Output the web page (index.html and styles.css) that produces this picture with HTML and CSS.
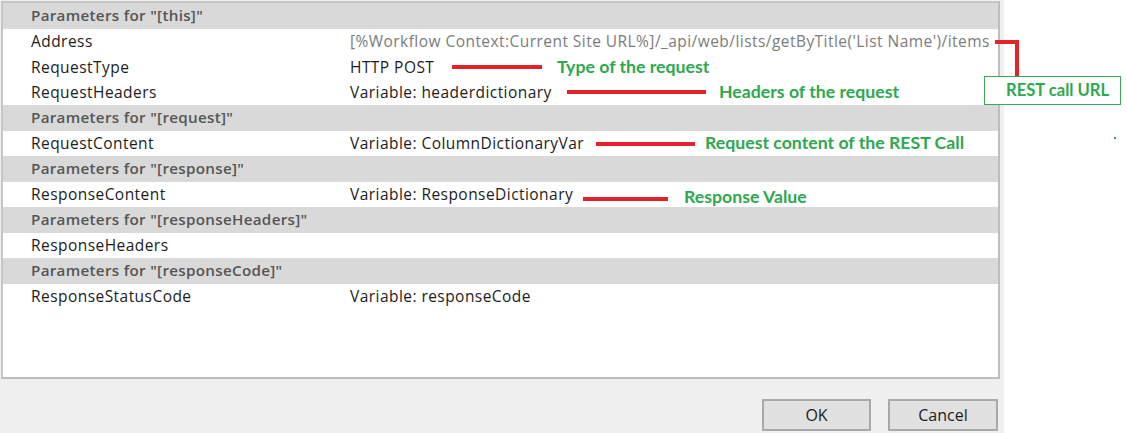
FILE: index.html
```html
<!DOCTYPE html>
<html>
    <head>
        <meta charset="utf-8" />
        <title>REST call parameters</title>
        <link rel="stylesheet" href="styles.css">
    </head>
    <body>
        <div class="stage">
            <div class="dialog">
                <div class="param-list">
                    <div class="group">Parameters for "[this]"</div>
                    <div class="row">
                        <span class="label">Address</span>
                        <span class="value readonly">[%Workflow Context:Current Site URL%]/_api/web/lists/getByTitle('List Name')/items</span>
                    </div>
                    <div class="row">
                        <span class="label">RequestType</span>
                        <span class="value">HTTP POST</span>
                    </div>
                    <div class="row">
                        <span class="label">RequestHeaders</span>
                        <span class="value">Variable: headerdictionary</span>
                    </div>
                    <div class="group">Parameters for "[request]"</div>
                    <div class="row">
                        <span class="label">RequestContent</span>
                        <span class="value">Variable: ColumnDictionaryVar</span>
                    </div>
                    <div class="group">Parameters for "[response]"</div>
                    <div class="row">
                        <span class="label">ResponseContent</span>
                        <span class="value">Variable: ResponseDictionary</span>
                    </div>
                    <div class="group">Parameters for "[responseHeaders]"</div>
                    <div class="row">
                        <span class="label">ResponseHeaders</span>
                        <span class="value"></span>
                    </div>
                    <div class="group">Parameters for "[responseCode]"</div>
                    <div class="row">
                        <span class="label">ResponseStatusCode</span>
                        <span class="value">Variable: responseCode</span>
                    </div>
                </div>
                <div class="btn-area">
                    <button type="button" class="btn">OK</button>
                    <button type="button" class="btn">Cancel</button>
                </div>
            </div>

            <!-- callouts drawn over the dialog -->
            <span class="mark mark-url-h"></span>
            <span class="mark mark-url-v"></span>
            <div class="note-box">REST call URL</div>

            <span class="mark" style="left:452px; top:65px; width:90px;"></span>
            <span class="note" style="left:557px; top:55px;">Type of the request</span>

            <span class="mark" style="left:567px; top:90px; width:139px;"></span>
            <span class="note" style="left:719px; top:80px;">Headers of the request</span>

            <span class="mark" style="left:596px; top:142px; width:99px;"></span>
            <span class="note" style="left:705px; top:131px;">Request content of the REST Call</span>

            <span class="mark" style="left:583px; top:197px; width:85px;"></span>
            <span class="note" style="left:684px; top:185px;">Response Value</span>

            <span class="dot"></span>
        </div>
    </body>
</html>
```

FILE: styles.css
```css
* {
	padding: 0;
	margin: 0;
	box-sizing: border-box;
}
body {
	background-color: #ffffff;
	font-family: "Open Sans", "Noto Sans", sans-serif;
}
.stage {
	width: 1127px;
	height: 433px;
	position: relative;
	overflow: hidden;
}
.dialog {
	width: 1004px;
	height: 433px;
	background-color: #f0f0f0;
	padding: 1px 0 0 1px;
	display: flex;
	flex-direction: column;
}
.param-list {
	width: 999px;
	height: 378px;
	background-color: #ffffff;
	border: 2px solid #bdbdbd;
	border-top-color: #c6c6c6;
	border-left-color: #c6c6c6;
}
.group {
	height: 25.5px;
	line-height: 25.5px;
	padding-left: 28px;
	background-color: #d9d9d9;
	color: #555555;
	font-size: 15.2px;
	font-weight: 600;
	letter-spacing: 0.3px;
}
.row {
	height: 25.5px;
	display: grid;
	grid-template-columns: 319px 1fr;
	align-items: center;
	padding-left: 28px;
	font-size: 15.5px;
	letter-spacing: 0.45px;
	color: #1c1c1c;
}
.value {
	white-space: nowrap;
}
.readonly {
	color: #7c7c7c;
}
.btn-area {
	display: flex;
	justify-content: flex-end;
	gap: 17px;
	padding: 20px 6px 0 0;
}
.btn {
	width: 109px;
	height: 32px;
	background-color: #e1e1e1;
	border: 2px solid #a9a9a9;
	font-family: "Open Sans", "Noto Sans", sans-serif;
	font-size: 16px;
	color: #1c1c1c;
}
.btn + .btn {
	width: 110px;
}
.mark {
	position: absolute;
	height: 4px;
	background-color: #e3232a;
}
.mark-url-h {
	left: 995px;
	top: 40px;
	width: 24px;
}
.mark-url-v {
	left: 1015px;
	top: 40px;
	width: 4px;
	height: 36px;
}
.note {
	position: absolute;
	color: #2ea84e;
	font-family: Lato, "Liberation Sans", sans-serif;
	font-weight: 700;
	font-size: 17.7px;
	line-height: 24px;
	white-space: nowrap;
}
.note-box {
	position: absolute;
	left: 984px;
	top: 76px;
	width: 137px;
	height: 29px;
	border: 1px solid #3aaa55;
	background-color: #ffffff;
	color: #2ea84e;
	font-family: Lato, "Liberation Sans", sans-serif;
	font-weight: 700;
	font-size: 16.6px;
	line-height: 26px;
	padding-left: 21px;
	white-space: nowrap;
}
.dot {
	position: absolute;
	left: 1114px;
	top: 137px;
	width: 2px;
	height: 2px;
	background-color: #2ea84e;
}
```
